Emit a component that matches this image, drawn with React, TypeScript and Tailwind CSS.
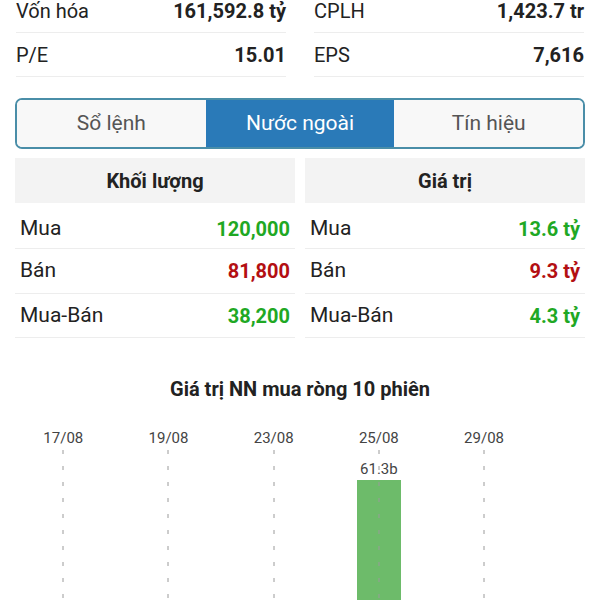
const stats = [
  [
    { label: 'Vốn hóa', value: '161,592.8 tỷ' },
    { label: 'P/E', value: '15.01' },
  ],
  [
    { label: 'CPLH', value: '1,423.7 tr' },
    { label: 'EPS', value: '7,616' },
  ],
]

const tabs = ['Sổ lệnh', 'Nước ngoài', 'Tín hiệu']

type Row = { label: string; value: string; tone: 'up' | 'down' }

const volumeRows: Row[] = [
  { label: 'Mua', value: '120,000', tone: 'up' },
  { label: 'Bán', value: '81,800', tone: 'down' },
  { label: 'Mua-Bán', value: '38,200', tone: 'up' },
]

const valueRows: Row[] = [
  { label: 'Mua', value: '13.6 tỷ', tone: 'up' },
  { label: 'Bán', value: '9.3 tỷ', tone: 'down' },
  { label: 'Mua-Bán', value: '4.3 tỷ', tone: 'up' },
]

const sessions: { label?: string; value?: string }[] = [
  { label: '17/08' },
  {},
  { label: '19/08' },
  {},
  { label: '23/08' },
  {},
  { label: '25/08', value: '61.3b' },
  {},
  { label: '29/08' },
  {},
]

const rowHeights = ['h-[39px]', 'h-[45px]', 'h-[44px]']

function FlowTable({ title, rows }: { title: string; rows: Row[] }) {
  return (
    <div className="flex flex-col">
      <div className="h-[45px] bg-[#f3f3f3] flex items-center justify-center text-[20px] font-bold text-[#222]">
        {title}
      </div>
      <div className="mt-[7px]">
        {rows.map((r, i) => (
          <div
            key={i}
            className={`flex items-center justify-between px-[5px] border-b border-[#ededed] ${rowHeights[i]}`}
          >
            <span className="text-[21px] text-[#222]">{r.label}</span>
            <span className={`text-[20px] font-bold ${r.tone === 'up' ? 'text-[#1fa824]' : 'text-[#b30f12]'}`}>
              {r.value}
            </span>
          </div>
        ))}
      </div>
    </div>
  )
}

export default function App() {
  return (
    <div className="w-[600px] h-[600px] overflow-hidden bg-white font-['Roboto',sans-serif]">
      <div className="grid grid-cols-2 gap-x-[28px] px-[16px] -mt-[11px]">
        {stats.map((col, ci) => (
          <div key={ci}>
            {col.map((s, i) => (
              <div key={i} className="h-[44px] flex items-center justify-between border-b border-[#ededed]">
                <span className="text-[20px] text-[#222]">{s.label}</span>
                <span className="text-[20px] font-bold text-[#222]">{s.value}</span>
              </div>
            ))}
          </div>
        ))}
      </div>

      <div className="mx-[15px] mt-[21px] h-[51px] border-2 border-[#4a8ea8] rounded-[7px] overflow-hidden flex">
        {tabs.map((t, i) => (
          <div
            key={t}
            className={`flex-1 flex items-center justify-center text-[21px] ${
              i === 1 ? 'bg-[#2a7ab8] text-white' : 'bg-[#f8f8f8] text-[#555]'
            }`}
          >
            {t}
          </div>
        ))}
      </div>

      <div className="grid grid-cols-2 gap-x-[10px] px-[15px] mt-[9px]">
        <FlowTable title="Khối lượng" rows={volumeRows} />
        <FlowTable title="Giá trị" rows={valueRows} />
      </div>

      <div className="mt-[39px] text-center text-[20px] font-bold text-[#222] leading-[24px]">
        Giá trị NN mua ròng 10 phiên
      </div>

      <div className="mt-[26px] ml-[37px] w-[526px] flex">
        {sessions.map((s, i) => (
          <div key={i} className="flex-1 flex flex-col items-center">
            <div className="h-[22px] text-[15px] leading-[22px] text-[#444] whitespace-nowrap">{s.label ?? ''}</div>
            <div className="relative w-full h-[160px] flex justify-center">
              {s.label && (
                <svg className="absolute top-0 left-1/2 -ml-[1px] z-10" width="2" height="160">
                  <line x1="1" y1="1" x2="1" y2="160" stroke="#9a9a9a" strokeWidth="1" strokeDasharray="4 12" />
                </svg>
              )}
              {s.value && (
                <div className="flex flex-col items-center mt-[11px]">
                  <span className="text-[15px] leading-[18px] text-[#444]">{s.value}</span>
                  <div className="mt-[2px] w-[44px] h-[130px] bg-[#6dbb6a]" />
                </div>
              )}
            </div>
          </div>
        ))}
      </div>
    </div>
  )
}
